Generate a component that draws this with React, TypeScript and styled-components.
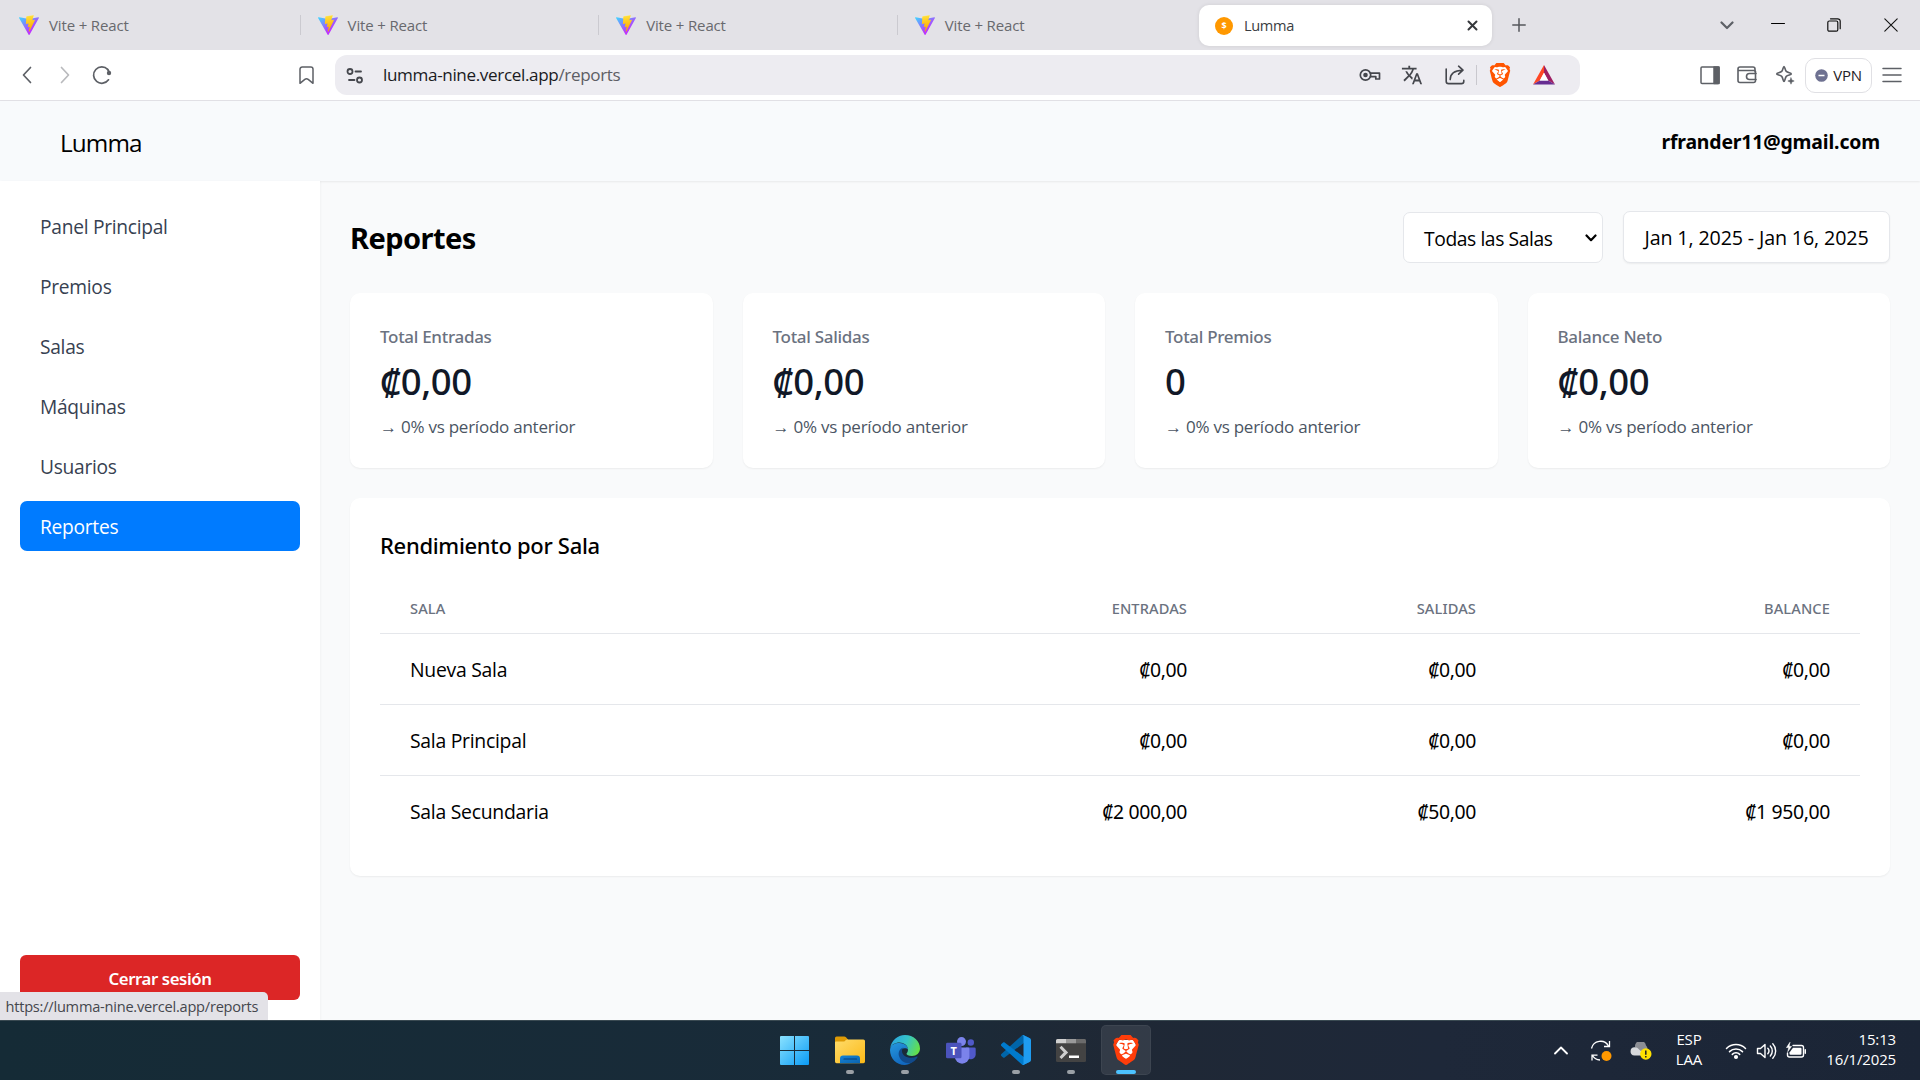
import React from "react";
import styled, { createGlobalStyle } from "styled-components";
import { SiBrave } from "react-icons/si";
import { MdTranslate } from "react-icons/md";

const REGULAR = `"Open Sans", "Noto Sans", sans-serif`;
const STRONG = `"Noto Sans", "Open Sans", sans-serif`;

const GlobalStyle = createGlobalStyle`
  * { box-sizing: border-box; }
  body { margin: 0; background: #f9fafb; font-family: ${REGULAR}; color: #000; overflow: hidden; }
  h1, h2, p { margin: 0; }
  button { font: inherit; border: 0; background: none; padding: 0; }
  svg { display: block; flex: none; }
`;

const Screen = styled.div`
  width: 1920px;
  height: 1080px;
  display: flex;
  flex-direction: column;
  overflow: hidden;
`;

/* ---------- browser chrome ---------- */

const TabBar = styled.div`
  flex: none;
  height: 50px;
  display: flex;
  align-items: flex-start;
  background: #e3e2e7;
  padding-left: 2px;
`;

const Tab = styled.div`
  width: 298.6px;
  height: 50px;
  display: flex;
  align-items: center;
  gap: 10px;
  padding-left: 17px;
  font-size: 15px;
  letter-spacing: -0.15px;
  color: #68696e;
`;

const TabLabel = styled.span`
  flex: 1;
`;

const TabDivider = styled.span`
  width: 1px;
  height: 20px;
  background: #cbcad0;
`;

const ActiveTab = styled.div`
  width: 293px;
  height: 41px;
  margin: 5px 0 0 2.6px;
  display: flex;
  align-items: center;
  gap: 11px;
  padding: 0 14px 0 16px;
  border-radius: 10px;
  background: #fff;
  box-shadow: 0 0 4px rgba(0, 0, 0, 0.09);
  font-size: 14.6px;
  line-height: 19px;
  letter-spacing: -0.35px;
  color: #3b3d42;
`;

const Cell = styled.div<{ $w: number }>`
  flex: none;
  width: ${(p) => p.$w}px;
  height: 50px;
  display: flex;
  align-items: center;
  justify-content: center;
`;

const Grow = styled.div`
  flex: 1;
`;

const Toolbar = styled.div`
  flex: none;
  height: 51px;
  display: flex;
  align-items: center;
  background: #fff;
  border-bottom: 1px solid #e2e1e6;
  color: #5d6066;
`;

const AddressBar = styled.div`
  width: 1245px;
  height: 40px;
  margin-left: 6px;
  padding: 0 15px 0 8px;
  display: flex;
  align-items: center;
  border-radius: 12px;
  background: #edecf1;
  color: #45474d;
`;

const Url = styled.span`
  flex: 1;
  padding: 0 0 2px 16px;
  font-size: 17.1px;
  letter-spacing: -0.36px;
  color: #1a1b1f;
`;

const UrlPath = styled.span`
  color: #5d5e64;
`;

const AddressDivider = styled.span`
  width: 1px;
  height: 20px;
  background: #c9c8ce;
`;

const VpnButton = styled.button`
  width: 67px;
  height: 35px;
  margin: 0 1px 0 1px;
  display: flex;
  align-items: center;
  justify-content: center;
  gap: 5px;
  border: 1px solid #e0e0e4;
  border-radius: 10px;
  font-size: 15px;
  letter-spacing: -0.2px;
  color: #1f2126;
`;

/* ---------- application ---------- */

const AppHeader = styled.header`
  position: relative;
  flex: none;
  height: 80px;
  display: flex;
  align-items: center;
  justify-content: space-between;
  padding: 2px 40px 0 60px;
  background: #f8fafc;
  box-shadow: 0 1px 2px rgba(0, 0, 0, 0.07);
`;

const Brand = styled.span`
  font-size: 24.3px;
  letter-spacing: -0.9px;
`;

const Account = styled.span`
  padding-bottom: 2px;
  font-family: ${STRONG};
  font-size: 19.4px;
  font-weight: 700;
  letter-spacing: -0.15px;
`;

const Body = styled.div`
  flex: 1;
  display: flex;
  min-height: 0;
`;

const Sidebar = styled.aside`
  position: relative;
  flex: none;
  width: 320px;
  padding: 20px;
  display: flex;
  flex-direction: column;
  justify-content: space-between;
  background: #fff;
  box-shadow: 1px 0 2px rgba(0, 0, 0, 0.03);
`;

const Nav = styled.nav`
  display: grid;
  gap: 10px;
`;

const NavItem = styled.a<{ $active?: boolean }>`
  height: 50px;
  padding: 1px 20px 0;
  display: flex;
  align-items: center;
  border-radius: 7px;
  font-size: 19.2px;
  letter-spacing: -0.28px;
  color: ${(p) => (p.$active ? "#fff" : "#374151")};
  background: ${(p) => (p.$active ? "#007bff" : "transparent")};
`;

const Logout = styled.button`
  height: 45px;
  padding-top: 1px;
  border-radius: 6px;
  background: #dc2626;
  color: #fff;
  font-family: ${STRONG};
  font-size: 16.8px;
  font-weight: 600;
  letter-spacing: -0.42px;
`;

const LinkStatus = styled.div`
  position: absolute;
  left: 0;
  bottom: 0;
  width: 268px;
  height: 28px;
  padding: 0 0 1px 5.5px;
  display: flex;
  align-items: center;
  border-top-right-radius: 5px;
  background: #e3e2e7;
  color: #45474d;
  font-size: 14.6px;
  letter-spacing: -0.23px;
  white-space: nowrap;
`;

const Main = styled.main`
  flex: 1;
  padding: 30px;
  display: flex;
  flex-direction: column;
  background: #f9fafb;
`;

const TitleRow = styled.div`
  height: 52px;
  display: flex;
  align-items: flex-end;
  gap: 20px;
`;

const Title = styled.h1`
  flex: 1;
  padding-top: 2px;
  line-height: 50px;
  font-family: ${STRONG};
  font-size: 29px;
  font-weight: 700;
  letter-spacing: -0.55px;
`;

const Select = styled.button`
  width: 200px;
  height: 51px;
  padding: 2px 5px 0 20px;
  display: flex;
  align-items: center;
  justify-content: space-between;
  border: 1px solid #e5e7eb;
  border-radius: 7px;
  background: #fff;
  font-size: 19.3px;
  letter-spacing: -0.42px;
`;

const DateRange = styled.button`
  width: 267px;
  height: 52px;
  padding-top: 1px;
  border: 1px solid #e5e7eb;
  border-radius: 7px;
  background: #fff;
  box-shadow: 0 1px 2px rgba(0, 0, 0, 0.06);
  font-size: 19.7px;
  letter-spacing: -0.14px;
  white-space: nowrap;
`;

const Stats = styled.div`
  margin-top: 30px;
  display: grid;
  grid-template-columns: repeat(4, 1fr);
  gap: 30px;
`;

const Card = styled.section`
  padding: 30px;
  border-radius: 10px;
  background: #fff;
  box-shadow: 0 1px 2px rgba(0, 0, 0, 0.06);
`;

const StatCard = styled(Card)`
  padding: 31px 30px 29px;
`;

const StatLabel = styled.p`
  line-height: 25px;
  font-family: ${STRONG};
  font-size: 17px;
  font-weight: 550;
  letter-spacing: -0.3px;
  color: #6b7280;
`;

const StatValue = styled.p`
  margin: 10px 0;
  line-height: 45px;
  font-family: ${STRONG};
  font-size: 36.5px;
  font-weight: 550;
  letter-spacing: -0.45px;
  color: #111827;
`;

const StatChange = styled.p`
  line-height: 25px;
  font-size: 17px;
  letter-spacing: -0.24px;
  color: #4b5563;
`;

const TableCard = styled(Card)`
  margin-top: 30px;
`;

const TableTitle = styled.h2`
  margin-bottom: 20px;
  line-height: 35px;
  font-family: ${STRONG};
  font-size: 22px;
  font-weight: 530;
  letter-spacing: -0.31px;
`;

const Row = styled.div`
  display: grid;
  grid-template-columns: 450px 387px 289px 354px;
  border-bottom: 1px solid #e5e7eb;
  &:last-child { border-bottom: 0; }
`;

const Th = styled.div<{ $right?: boolean }>`
  padding: 15px 30px;
  line-height: 20px;
  font-family: ${STRONG};
  font-size: 14.6px;
  font-weight: 500;
  letter-spacing: 0.12px;
  text-align: ${(p) => (p.$right ? "right" : "left")};
  color: #6b7280;
`;

const Td = styled.div`
  padding: 21px 30px 19px;
  line-height: 30px;
  font-size: 19.4px;
  letter-spacing: -0.28px;
`;

const Amount = styled(Td)`
  font-family: ${STRONG};
  font-size: 19.4px;
  letter-spacing: -0.36px;
  text-align: right;
`;

/* ---------- taskbar ---------- */

const Taskbar = styled.footer`
  flex: none;
  height: 60px;
  padding: 0 24px 0 767px;
  display: flex;
  align-items: stretch;
  border-top: 1px solid #3a4a52;
  background: linear-gradient(90deg, #152b36 0%, #192b39 45%, #1f2835 58%, #1e2839 75%, #1b2536 100%);
  color: #fff;
`;

const TaskSlot = styled.div`
  width: 55.3px;
  display: flex;
  justify-content: center;
  padding-top: 4px;
`;

const TaskTile = styled.div<{ $active?: boolean }>`
  width: 50px;
  height: 50px;
  display: flex;
  flex-direction: column;
  align-items: center;
  border-radius: 5px;
  background: ${(p) => (p.$active ? "rgba(255,255,255,0.09)" : "transparent")};
  box-shadow: ${(p) => (p.$active ? "inset 0 0 0 1px rgba(255,255,255,0.05)" : "none")};
`;

const TaskGlyph = styled.div`
  height: 45px;
  padding-top: 5px;
  display: flex;
  align-items: center;
`;

const Running = styled.span<{ $active?: boolean }>`
  width: ${(p) => (p.$active ? 20 : 8)}px;
  height: 4px;
  border-radius: 2px;
  background: ${(p) => (p.$active ? "#4cc2ff" : "#9aa0a6")};
`;

const TrayCell = styled.div<{ $w: number }>`
  width: ${(p) => p.$w}px;
  display: flex;
  align-items: center;
  justify-content: center;
`;

const TrayText = styled.div<{ $w: number; $right?: boolean }>`
  width: ${(p) => p.$w}px;
  padding-top: 8px;
  font-size: 15px;
  line-height: 20px;
  letter-spacing: -0.15px;
  text-align: ${(p) => (p.$right ? "right" : "center")};
`;

/* ---------- icons ---------- */

type LineIconProps = { w: number; h: number; sw?: number; color?: string; children: React.ReactNode };

const LineIcon = ({ w, h, sw = 1.6, color = "currentColor", children }: LineIconProps) => (
  <svg width={w} height={h} viewBox={`0 0 ${w} ${h}`} fill="none" stroke={color} strokeWidth={sw} strokeLinecap="round" strokeLinejoin="round">
    {children}
  </svg>
);

const ViteLogo = ({ id }: { id: string }) => (
  <svg width="20" height="20" viewBox="0 0 256 257">
    <defs>
      <linearGradient id={`${id}a`} x1="-.828%" x2="57.636%" y1="7.652%" y2="78.411%">
        <stop offset="0%" stopColor="#41D1FF" />
        <stop offset="100%" stopColor="#BD34FE" />
      </linearGradient>
      <linearGradient id={`${id}b`} x1="43.376%" x2="50.316%" y1="2.242%" y2="89.03%">
        <stop offset="0%" stopColor="#FFEA83" />
        <stop offset="8.333%" stopColor="#FFDD35" />
        <stop offset="100%" stopColor="#FFA800" />
      </linearGradient>
    </defs>
    <path fill={`url(#${id}a)`} d="M255.153 37.938L134.897 252.976c-2.483 4.44-8.862 4.466-11.382.048L.875 37.958c-2.746-4.814 1.371-10.646 6.827-9.67l120.385 21.517a6.537 6.537 0 0 0 2.322-.004l117.867-21.483c5.438-.991 9.574 4.796 6.877 9.62Z" />
    <path fill={`url(#${id}b)`} d="M185.432.063L96.44 17.501a3.268 3.268 0 0 0-2.634 3.014l-5.474 92.456a3.268 3.268 0 0 0 3.997 3.378l24.777-5.718c2.318-.535 4.413 1.507 3.936 3.838l-7.361 36.047c-.495 2.426 1.782 4.5 4.151 3.78l15.304-4.649c2.372-.72 4.652 1.36 4.15 3.788l-11.698 56.621c-.732 3.542 3.979 5.473 5.943 2.437l1.313-2.028l72.516-144.72c1.215-2.423-.88-5.186-3.54-4.672l-25.505 4.922c-2.396.462-4.435-1.77-3.759-4.114l16.646-57.705c.677-2.35-1.37-4.583-3.769-4.113Z" />
  </svg>
);

const Coin = styled.span`
  width: 18px;
  height: 18px;
  display: flex;
  align-items: center;
  justify-content: center;
  border-radius: 50%;
  background: #ff9800;
  color: #fff;
  font: 700 9px/1 ${STRONG};
`;

const BraveFace = styled.span<{ $size: number; $color: string }>`
  display: grid;
  color: ${(p) => p.$color};
  > * { grid-area: 1 / 1; width: ${(p) => p.$size}px; height: ${(p) => p.$size}px; }
`;

const Brave = ({ size, color }: { size: number; color: string }) => (
  <BraveFace $size={size} $color={color}>
    <svg viewBox="0 0 24 24">
      <path fill="#fff" d="M6 4h12l2 4-3 10-5 4-5-4L4 8z" />
    </svg>
    <SiBrave />
  </BraveFace>
);

const KeyIcon = () => (
  <LineIcon w={22} h={14} sw={1.7}>
    <circle cx="6.5" cy="7" r="5.2" />
    <circle cx="6.5" cy="7" r="2.3" fill="currentColor" stroke="none" />
    <path d="M11.5 5.2H20.5V11H16.8V8.6H11.4" />
  </LineIcon>
);

const ShareIcon = () => (
  <LineIcon w={20} h={20} sw={1.6}>
    <path d="M1.2 4v12.2a2.4 2.4 0 0 0 2.4 2.4h12.8a2.4 2.4 0 0 0 2.4-2.4V15.4" />
    <path d="M5.2 14.6C5.2 8.6 9 5.4 17.6 5.2M13.6 1.2l4.4 4-4.4 4" />
  </LineIcon>
);

const RewardsIcon = () => (
  <svg width="24" height="22" viewBox="0 0 24 22">
    <path fill="#ff4724" d="M12 1 1 20.5l6.8-4L12 8.8z" />
    <path fill="#9e1f63" d="m12 1 11 19.5-6.8-4L12 8.8z" />
    <path fill="#662d91" d="M1 20.5h22l-6.8-4H7.8z" />
    <path fill="#fff" d="m12 8.8 4.2 7.7H7.8z" />
  </svg>
);

const WindowsLogo = () => (
  <svg width="29" height="29" viewBox="0 0 29 29">
    <defs>
      <linearGradient id="win" x1="0" y1="0" x2="1" y2="1">
        <stop offset="0" stopColor="#8ae2ff" />
        <stop offset="1" stopColor="#0a9bf5" />
      </linearGradient>
    </defs>
    <path fill="url(#win)" d="M1 0h13v14H0V1a1 1 0 0 1 1-1zM15 0h13a1 1 0 0 1 1 1v13H15zM0 15h14v14H1a1 1 0 0 1-1-1zM15 15h14v13a1 1 0 0 1-1 1H15z" />
  </svg>
);

const FolderLogo = () => (
  <svg width="30" height="28" viewBox="0 0 30 28">
    <defs>
      <linearGradient id="fold" x1="0" y1="0" x2="1" y2="1">
        <stop offset="0" stopColor="#ffdc6b" />
        <stop offset="1" stopColor="#fbb917" />
      </linearGradient>
      <linearGradient id="foldb" x1="0" y1="0" x2="1" y2="1">
        <stop offset="0" stopColor="#1583d6" />
        <stop offset="1" stopColor="#0b64b0" />
      </linearGradient>
    </defs>
    <path fill="#dd9a05" d="M0 2a1.6 1.6 0 0 1 1.6-1.6h7.6c.8 0 1.3.3 1.8.8L13 3.4V10H0z" />
    <path fill="url(#fold)" d="M0 6.5q0-1 1-1h7.6q.7 0 1.3-.6l1-1q.6-.5 1.4-.5H28.4A1.6 1.6 0 0 1 30 5v20.6a1.6 1.6 0 0 1-1.6 1.6H1.6A1.6 1.6 0 0 1 0 25.6z" />
    <path fill="url(#foldb)" d="M5 27.2V22.5a3 3 0 0 1 3-3h14a3 3 0 0 1 3 3v4.7z" />
    <path stroke="#083f7c" strokeWidth="1.2" strokeLinecap="round" d="M9 23h12.5" />
  </svg>
);

const EdgeLogo = () => (
  <svg width="30" height="30" viewBox="0 0 30 30">
    <defs>
      <linearGradient id="edTop" x1="0" y1="0.3" x2="1" y2="0.6">
        <stop offset="0" stopColor="#2aa5e0" />
        <stop offset="0.5" stopColor="#35c4c8" />
        <stop offset="1" stopColor="#66e045" />
      </linearGradient>
      <linearGradient id="edLeft" x1="0" y1="0" x2="0.5" y2="1">
        <stop offset="0" stopColor="#2698dd" />
        <stop offset="1" stopColor="#1168bf" />
      </linearGradient>
    </defs>
    <path fill="url(#edLeft)" d="M0 15C.5 9.5 5 8 9.5 8c5 0 8.5 3 8.5 6.5-2-2.5-8-1.5-8 3.5 0 6 5 10 12 9-2 2-5 3-7.500 3C6.5 30 0 23.5 0 15z" />
    <path fill="#114a8b" d="M13.5 12.5c-4 1-5.5 5-4.5 8.5 1.5 5 6 8 12 7 2.8-1.2 5-3.2 6.5-5.8.3-.6-.2-1-.8-.7C20.5 24.5 12 22 12 16c0-1.5.6-2.7 1.500-3.500z" />
    <path fill="url(#edTop)" d="M.2 13.5C1.2 5.5 7.5 0 15 0c8.5 0 15 6 15 13.5 0 4.5-3.5 7.5-8 7.5-3.5 0-5.5-1.2-5.5-2.3 0-.7 1.500-1.500 1.500-4C18 10.5 14 7.5 9.5 7.5 5 7.5 1 9.8.2 13.5z" />
  </svg>
);

const TeamsText = styled.text`
  font: 700 11px ${STRONG};
  fill: #fff;
`;

const TeamsLogo = () => (
  <svg width="30" height="27" viewBox="0 0 30 27">
    <circle cx="24.8" cy="5.5" r="3.2" fill="#5059c9" />
    <path fill="#5059c9" d="M20 10.5h8.4a1.3 1.3 0 0 1 1.3 1.3v6a5 5 0 0 1-9.7 1z" />
    <circle cx="15.5" cy="4.6" r="4.5" fill="#7b83eb" />
    <path fill="#7b83eb" d="M9 10.5h13a1.4 1.4 0 0 1 1.4 1.4v7.5a7.3 7.3 0 0 1-14.6 0z" />
    <rect x="0" y="5.8" width="15.5" height="15.5" rx="1.4" fill="#4b53bc" />
    <TeamsText x="7.75" y="17.5" textAnchor="middle">T</TeamsText>
  </svg>
);

const VsCodeLogo = () => (
  <svg width="30" height="30" viewBox="0 0 100 100">
    <path fill="#0065a9" d="M96.5 10.8 75.9.9c-2.4-1.2-5.2-.7-7.1 1.2L1.3 63.6c-1.8 1.7-1.8 4.5 0 6.2l5.5 5c1.5 1.3 3.7 1.4 5.3.2L93.4 13.4c2.7-2.1 6.6-.1 6.6 3.3v-.2c0-2.4-1.4-4.6-3.5-5.7z" />
    <path fill="#007acc" d="M96.5 89.2 75.9 99.1c-2.4 1.2-5.2.7-7.1-1.2L1.3 36.4c-1.8-1.7-1.8-4.5 0-6.2l5.5-5c1.5-1.3 3.7-1.4 5.3-.2l81.3 61.6c2.7 2.1 6.6.1 6.6-3.3v.2c0 2.4-1.4 4.6-3.5 5.7z" />
    <path fill="#1f9cf0" d="M75.9 99.1c-2.4 1.2-5.2.7-7.1-1.2 2.3 2.3 6.2.7 6.2-2.6V4.7c0-3.3-3.9-4.9-6.2-2.6 1.9-1.9 4.7-2.3 7.1-1.2l20.6 9.9c2.1 1 3.5 3.2 3.5 5.7v67c0 2.4-1.4 4.6-3.5 5.7z" />
  </svg>
);

const TerminalLogo = () => (
  <svg width="30" height="23" viewBox="0 0 30 23">
    <rect width="30" height="23" rx="1.5" fill="#434343" />
    <path fill="#d0d0d0" d="M1.5 0H10v4.3H0V1.5A1.5 1.5 0 0 1 1.5 0z" />
    <path fill="#9a9a9a" d="M10 0h10v4.3H10z" />
    <path fill="#6b6b6b" d="M20 0h8.5A1.5 1.5 0 0 1 30 1.5v2.8H20z" />
    <path fill="none" stroke="#cfcfcf" strokeWidth="3" d="m4.5 7.8 5.5 5.600-5.500 5.600" />
    <path fill="#fff" d="M13 16.5h10V19H13z" />
  </svg>
);

const SyncIcon = () => (
  <svg width="22" height="22" viewBox="0 0 22 22" fill="none" stroke="#fff" strokeWidth="1.3">
    <path d="M1.5 8.5A9.2 9.2 0 0 1 18.5 6M19.5 1v5.5H14M2 20.5V15.2h5.500M2.5 15.5A9 9 0 0 0 10 20" />
    <circle cx="16.5" cy="16" r="5" fill="#ff9800" stroke="none" />
  </svg>
);

const CloudIcon = () => (
  <svg width="22" height="18" viewBox="0 0 22 18">
    <path fill="#8b8e94" d="M5 5a5.5 5.5 0 0 1 11-1.500A5 5 0 0 1 17 9l-8 2z" />
    <path fill="#d7d9dc" d="M4.5 13.5a4 4 0 0 1 .3-8.2c2 0 3 .7 4 2L13 11v2.5z" />
    <circle cx="15.8" cy="12" r="5.7" fill="#ffe100" />
    <path stroke="#222" strokeWidth="1.5" d="M15.8 8.5v4.2M15.8 13.9v1.6" />
  </svg>
);

const WifiIcon = () => (
  <LineIcon w={22} h={18} sw={1.5}>
    <path d="M1.5 6.5a13.5 13.5 0 0 1 19 0M4.5 9.6a9.2 9.2 0 0 1 13 0M7.3 12.4a5.2 5.2 0 0 1 7.4 0" />
    <circle cx="11" cy="15" r="1.3" fill="#fff" />
  </LineIcon>
);

const VolumeIcon = () => (
  <LineIcon w={21} h={18} sw={1.4}>
    <path d="M1.5 6.5v5h3l4.5 4V2.5l-4.5 4zM11.8 6.3a4 4 0 0 1 0 5.4M14.3 4a7.3 7.3 0 0 1 0 10M16.8 1.8a10.5 10.5 0 0 1 0 14.4" />
  </LineIcon>
);

const BatteryIcon = () => (
  <LineIcon w={22} h={18} sw={1.4}>
    <path d="M8 3.5h8.5a2 2 0 0 1 2 2v7.5a2 2 0 0 1-2 2h-12a2 2 0 0 1-2-2v-2M20.3 7.7v3.6" />
    <path d="M8 5.8h7.5a1 1 0 0 1 1 1v5a1 1 0 0 1-1 1h-10a1 1 0 0 1-1-1V10.5z" fill="#fff" stroke="none" />
    <path d="M4.8.6 1.5 5.6h2.3L2.8 9.6 6.5 4.4H4.2z" fill="#fff" strokeWidth="0.6" />
  </LineIcon>
);

/* ---------- data ---------- */

const idleTabs = ["Vite + React", "Vite + React", "Vite + React", "Vite + React"];
const navItems = ["Panel Principal", "Premios", "Salas", "Máquinas", "Usuarios", "Reportes"];
const stats = [
  { label: "Total Entradas", value: "₡0,00" },
  { label: "Total Salidas", value: "₡0,00" },
  { label: "Total Premios", value: "0" },
  { label: "Balance Neto", value: "₡0,00" },
];
const rows = [
  ["Nueva Sala", "₡0,00", "₡0,00", "₡0,00"],
  ["Sala Principal", "₡0,00", "₡0,00", "₡0,00"],
  ["Sala Secundaria", "₡2 000,00", "₡50,00", "₡1 950,00"],
];
const apps = [
  { icon: <WindowsLogo />, running: false },
  { icon: <FolderLogo />, running: true },
  { icon: <EdgeLogo />, running: true },
  { icon: <TeamsLogo />, running: false },
  { icon: <VsCodeLogo />, running: true },
  { icon: <TerminalLogo />, running: true },
  { icon: <Brave size={30} color="#ff3d0a" />, running: true, active: true },
];

/* ---------- page ---------- */

export default function App() {
  return (
    <Screen>
      <GlobalStyle />
      <TabBar>
        {idleTabs.map((name, i) => (
          <Tab key={i}>
            <ViteLogo id={`v${i}`} />
            <TabLabel>{name}</TabLabel>
            {i < 3 && <TabDivider />}
          </Tab>
        ))}
        <ActiveTab>
          <Coin>$</Coin>
          <TabLabel>Lumma</TabLabel>
          <LineIcon w={11} h={11} sw={2} color="#35373b"><path d="m1.5 1.5 8 8m0-8-8 8" /></LineIcon>
        </ActiveTab>
        <Cell $w={54}>
          <LineIcon w={14} h={14} sw={1.5} color="#55575c"><path d="M7 .8v12.4M.8 7h12.4" /></LineIcon>
        </Cell>
        <Grow />
        <Cell $w={46}>
          <LineIcon w={14} h={9} sw={2.2} color="#5d6066"><path d="m1.5 1.5 5.5 5.5 5.5-5.5" /></LineIcon>
        </Cell>
        <Cell $w={56}>
          <LineIcon w={14} h={4} sw={1} color="#000"><path d="M.5.5h13" /></LineIcon>
        </Cell>
        <Cell $w={56}>
          <LineIcon w={14} h={14} sw={1.2} color="#111">
            <rect x=".8" y="3" width="10" height="10.2" rx="1.5" />
            <path d="M3.5.8h7.2a2.5 2.5 0 0 1 2.5 2.5v7.4" />
          </LineIcon>
        </Cell>
        <Cell $w={58}>
          <LineIcon w={14} h={14} sw={1.1} color="#111"><path d="m.8.8 12.4 12.4m0-12.4L.8 13.2" /></LineIcon>
        </Cell>
      </TabBar>

      <Toolbar>
        <Cell $w={18} />
        <Cell $w={18}><LineIcon w={10} h={18} sw={1.7}><path d="m8.5 1.5-7 7.5 7 7.5" /></LineIcon></Cell>
        <Cell $w={20} />
        <Cell $w={18}><LineIcon w={10} h={18} sw={1.7} color="#b9babd"><path d="m1.5 1.5 7 7.5-7 7.5" /></LineIcon></Cell>
        <Cell $w={18} />
        <Cell $w={20}>
          <svg width="20" height="20" viewBox="0 0 20 20" fill="none" stroke="#5d6066" strokeWidth="1.7" strokeLinecap="round">
            <path d="M16.5 14.8A8.2 8.2 0 1 1 15.8 4.5" />
            <circle cx="17" cy="8" r="2.2" fill="#5d6066" stroke="none" />
            <path d="M15.5 4.3 17.3 7" />
          </svg>
        </Cell>
        <Grow />
        <Cell $w={46}>
          <LineIcon w={15} h={19} sw={1.5}><path d="M1 3.2A2.2 2.2 0 0 1 3.2 1h8.6A2.2 2.2 0 0 1 14 3.2V17.3L9.2 13.4a2.8 2.8 0 0 0-3.4 0L1 17.3z" /></LineIcon>
        </Cell>
        <AddressBar>
          <Cell $w={24}>
            <LineIcon w={18} h={18} sw={1.8}>
              <circle cx="4" cy="5.5" r="2.5" /><path d="M9.5 5.5H15" />
              <circle cx="13.5" cy="14" r="2.5" /><path d="M3 14h5.5" />
            </LineIcon>
          </Cell>
          <Url>lumma-nine.vercel.app<UrlPath>/reports</UrlPath></Url>
          <Cell $w={42}><KeyIcon /></Cell>
          <Cell $w={42}><MdTranslate size={22} /></Cell>
          <Cell $w={43}><ShareIcon /></Cell>
          <AddressDivider />
          <Cell $w={46}><Brave size={24} color="#ff5500" /></Cell>
          <Cell $w={42}><RewardsIcon /></Cell>
        </AddressBar>
        <Cell $w={112} />
        <Cell $w={36}>
          <LineIcon w={20} h={19} sw={1.5}>
            <rect x="1" y="1" width="18" height="16.5" rx="1" />
            <path d="M14 1h5v16.5h-5z" fill="currentColor" />
          </LineIcon>
        </Cell>
        <Cell $w={38}>
          <LineIcon w={20} h={18} sw={1.6}>
            <path d="M18 6V3a2 2 0 0 0-2-2H3a2 2 0 0 0-2 2v11.5a2 2 0 0 0 2 2h13.5a2 2 0 0 0 2-2V5.5a1 1 0 0 0-1-1H2" />
            <path d="M19 7.5h-6.5a3 3 0 0 0 0 6H19" />
          </LineIcon>
        </Cell>
        <Cell $w={38}>
          <LineIcon w={20} h={20} sw={1.6}>
            <path d="M9 1.5c.9 0 1 3.5 2.3 4.9s5 1.500 5 2.500-3.700 1.100-5 2.500S9.9 16.5 9 16.5s-1-3.700-2.300-5.100-5-1.500-5-2.500 3.700-1.100 5-2.500S8.1 1.5 9 1.5z" />
            <path d="m16 12.8.9 2.3 2.3.9-2.3.9-.9 2.3-.9-2.3-2.3-.9 2.3-.9z" fill="currentColor" strokeWidth="0.5" />
          </LineIcon>
        </Cell>
        <VpnButton>
          <svg width="13" height="13" viewBox="0 0 13 13">
            <circle cx="6.5" cy="6.5" r="6.3" fill="#6e7191" />
            <path stroke="#fff" strokeWidth="1.5" d="M3.5 6.5h6" />
          </svg>
          VPN
        </VpnButton>
        <Cell $w={38}>
          <LineIcon w={20} h={16} sw={1.5}><path d="M1 1.5h18M1 8h18M1 14.5h18" /></LineIcon>
        </Cell>
        <Cell $w={9} />
      </Toolbar>

      <AppHeader>
        <Brand>Lumma</Brand>
        <Account>rfrander11@gmail.com</Account>
      </AppHeader>

      <Body>
        <Sidebar>
          <Nav>
            {navItems.map((item) => (
              <NavItem key={item} $active={item === "Reportes"}>{item}</NavItem>
            ))}
          </Nav>
          <Logout>Cerrar sesión</Logout>
          <LinkStatus>https://lumma-nine.vercel.app/reports</LinkStatus>
        </Sidebar>

        <Main>
          <TitleRow>
            <Title>Reportes</Title>
            <Select>
              Todas las Salas
              <LineIcon w={12} h={9} sw={2.2} color="#000"><path d="m1.5 1.5 4.5 4.7 4.5-4.7" /></LineIcon>
            </Select>
            <DateRange>Jan 1, 2025 - Jan 16, 2025</DateRange>
          </TitleRow>

          <Stats>
            {stats.map((s) => (
              <StatCard key={s.label}>
                <StatLabel>{s.label}</StatLabel>
                <StatValue>{s.value}</StatValue>
                <StatChange>→ 0% vs período anterior</StatChange>
              </StatCard>
            ))}
          </Stats>

          <TableCard>
            <TableTitle>Rendimiento por Sala</TableTitle>
            <Row>
              <Th>SALA</Th>
              <Th $right>ENTRADAS</Th>
              <Th $right>SALIDAS</Th>
              <Th $right>BALANCE</Th>
            </Row>
            {rows.map(([sala, ...amounts]) => (
              <Row key={sala}>
                <Td>{sala}</Td>
                {amounts.map((a, i) => <Amount key={i}>{a}</Amount>)}
              </Row>
            ))}
          </TableCard>
        </Main>
      </Body>

      <Taskbar>
        {apps.map((app, i) => (
          <TaskSlot key={i}>
            <TaskTile $active={app.active}>
              <TaskGlyph>{app.icon}</TaskGlyph>
              {app.running && <Running $active={app.active} />}
            </TaskTile>
          </TaskSlot>
        ))}
        <Grow />
        <TrayCell $w={30}>
          <LineIcon w={14} h={9} sw={1.8}><path d="m1 7.5 6-6 6 6" /></LineIcon>
        </TrayCell>
        <TrayCell $w={49}><SyncIcon /></TrayCell>
        <TrayCell $w={32}><CloudIcon /></TrayCell>
        <TrayText $w={64}>ESP<br />LAA</TrayText>
        <TrayCell $w={30}><WifiIcon /></TrayCell>
        <TrayCell $w={30}><VolumeIcon /></TrayCell>
        <TrayCell $w={30}><BatteryIcon /></TrayCell>
        <TrayText $w={85} $right>15:13<br />16/1/2025</TrayText>
      </Taskbar>
    </Screen>
  );
}
